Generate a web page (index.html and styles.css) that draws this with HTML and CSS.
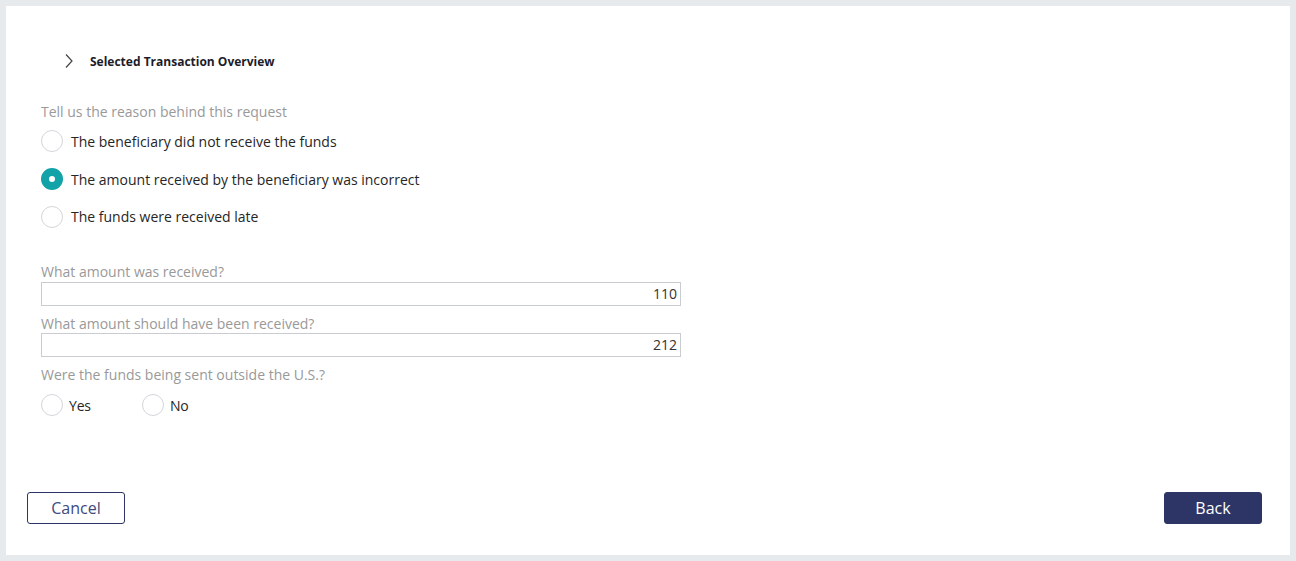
FILE: index.html
```html
<!DOCTYPE html>
<html>
<head>
<meta charset="utf-8">
<link rel="stylesheet" href="styles.css">
</head>
<body>
<div class="panel">
  <div class="header">
    <svg class="chev" width="10" height="16" viewBox="0 0 10 16"><path d="M2 1.5 L8 8 L2 14.5" fill="none" stroke="#444" stroke-width="1.2"/></svg>
    <span class="title">Selected Transaction Overview</span>
  </div>
  <div class="content">
    <div class="label reason">Tell us the reason behind this request</div>
    <div class="radios">
      <div class="radio-row"><span class="radio"></span><span class="rtext">The beneficiary did not receive the funds</span></div>
      <div class="radio-row r2"><span class="radio checked"></span><span class="rtext">The amount received by the beneficiary was incorrect</span></div>
      <div class="radio-row r3"><span class="radio"></span><span class="rtext">The funds were received late</span></div>
    </div>
    <div class="label l1">What amount was received?</div>
    <div class="input">110</div>
    <div class="label l2">What amount should have been received?</div>
    <div class="input i2">212</div>
    <div class="label l2">Were the funds being sent outside the U.S.?</div>
    <div class="yesno">
      <div class="yn"><span class="radio"></span><span class="rtext">Yes</span></div>
      <div class="yn"><span class="radio"></span><span class="rtext">No</span></div>
    </div>
  </div>
  <div class="buttons">
    <button class="btn cancel">Cancel</button>
    <button class="btn back">Back</button>
  </div>
</div>
</body>
</html>
```
FILE: styles.css
```css
html, body {
  margin: 0;
  padding: 0;
  background: #e6eaed;
  font-family: "Open Sans", "Noto Sans", sans-serif;
}
.panel {
  margin: 6px;
  height: 549px;
  background: #fff;
  display: flex;
  flex-direction: column;
}
.header {
  margin-top: 45px;
  height: 20px;
  display: flex;
  align-items: center;
  padding-left: 58px;
}
.chev {
  display: block;
}
.title {
  margin-left: 16px;
  font-size: 12px;
  font-weight: 700;
  color: #1c1c2a;
}
.content {
  padding-left: 35px;
  display: flex;
  flex-direction: column;
}
.label {
  font-size: 14px;
  color: #999;
  line-height: 18px;
  height: 18px;
}
.reason {
  margin-top: 32px;
}
.radios {
  display: flex;
  flex-direction: column;
  padding-top: 1px;
}
.radio-row {
  height: 38px;
  display: flex;
  align-items: center;
}
.radio-row.r3 {
  height: 37px;
}
.radio {
  box-sizing: border-box;
  width: 22px;
  height: 22px;
  border-radius: 50%;
  border: 1px solid #d3d6da;
  background: #fff;
  flex: none;
}
.radio.checked {
  border: 8px solid #12a3a8;
  background: #fff;
}
.rtext {
  margin-left: 8px;
  font-size: 14px;
  color: #262626;
}
.l1 {
  margin-top: 28px;
}
.input {
  box-sizing: border-box;
  margin-top: 1px;
  width: 640px;
  height: 24px;
  border: 1px solid #c9ccd0;
  text-align: right;
  font-size: 14px;
  line-height: 22px;
  padding-right: 3px;
  color: #333;
}
.input.i2 {
  margin-top: 0;
}
.l2 {
  margin-top: 9px;
}
.yesno {
  margin-top: 9px;
  height: 24px;
  display: flex;
  align-items: center;
}
.yn {
  display: flex;
  align-items: center;
  width: 101px;
}
.yn .rtext {
  margin-left: 6px;
  letter-spacing: -0.2px;
}
.buttons {
  margin-top: auto;
  padding: 0 28px 31px 21px;
  display: flex;
  justify-content: space-between;
}
.btn {
  box-sizing: border-box;
  width: 98px;
  height: 32px;
  border-radius: 3px;
  font-family: "Open Sans", "Noto Sans", sans-serif;
  font-size: 16px;
  border: 1px solid #2c3566;
  padding: 0;
}
.cancel {
  background: #fff;
  color: #3d4a80;
}
.back {
  background: #2d3566;
  color: #fff;
}
```
